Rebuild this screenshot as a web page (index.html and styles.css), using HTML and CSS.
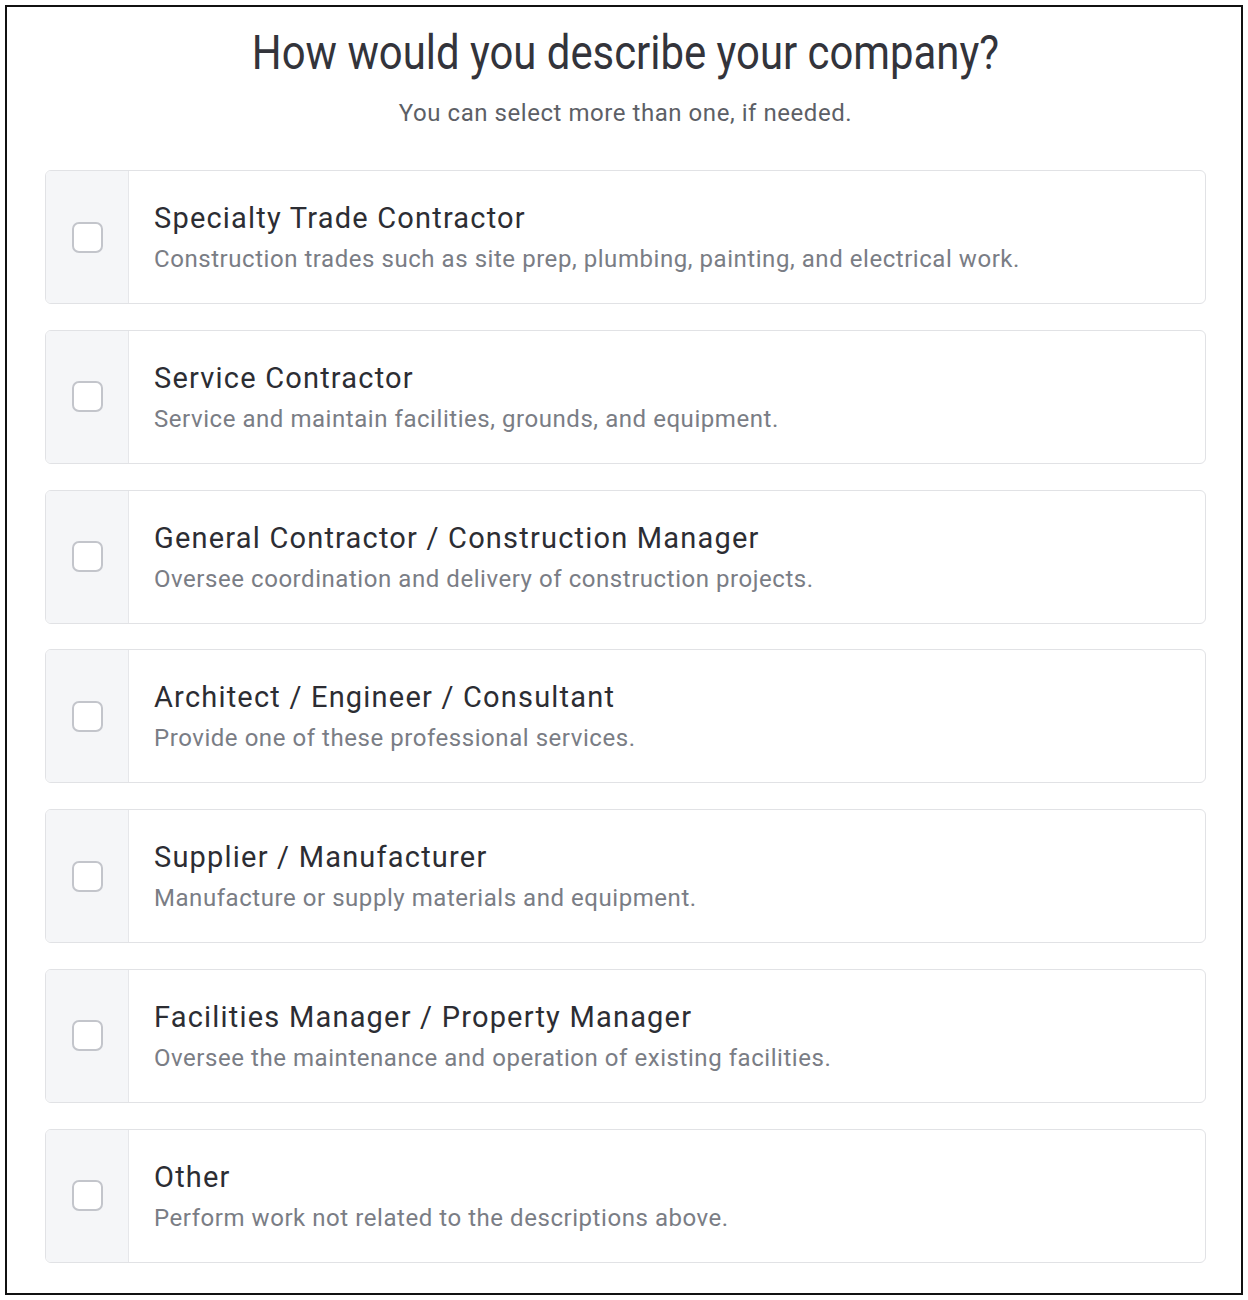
FILE: index.html
```html
<!DOCTYPE html>
<html lang="en">
<head>
<meta charset="utf-8">
<title>Company type</title>
<link rel="stylesheet" href="styles.css">
</head>
<body>
<div class="frame">
  <header class="head">
    <h1 class="title">How would you describe your company?</h1>
    <p class="subtitle">You can select more than one, if needed.</p>
  </header>
  <div class="options">
    <label class="option">
      <span class="check-col"><span class="box"></span></span>
      <span class="text">
        <span class="name">Specialty Trade Contractor</span>
        <span class="desc">Construction trades such as site prep, plumbing, painting, and electrical work.</span>
      </span>
    </label>
    <label class="option">
      <span class="check-col"><span class="box"></span></span>
      <span class="text">
        <span class="name">Service Contractor</span>
        <span class="desc">Service and maintain facilities, grounds, and equipment.</span>
      </span>
    </label>
    <label class="option">
      <span class="check-col"><span class="box"></span></span>
      <span class="text">
        <span class="name">General Contractor / Construction Manager</span>
        <span class="desc">Oversee coordination and delivery of construction projects.</span>
      </span>
    </label>
    <label class="option">
      <span class="check-col"><span class="box"></span></span>
      <span class="text">
        <span class="name">Architect / Engineer / Consultant</span>
        <span class="desc">Provide one of these professional services.</span>
      </span>
    </label>
    <label class="option">
      <span class="check-col"><span class="box"></span></span>
      <span class="text">
        <span class="name">Supplier / Manufacturer</span>
        <span class="desc">Manufacture or supply materials and equipment.</span>
      </span>
    </label>
    <label class="option">
      <span class="check-col"><span class="box"></span></span>
      <span class="text">
        <span class="name">Facilities Manager / Property Manager</span>
        <span class="desc">Oversee the maintenance and operation of existing facilities.</span>
      </span>
    </label>
    <label class="option">
      <span class="check-col"><span class="box"></span></span>
      <span class="text">
        <span class="name">Other</span>
        <span class="desc">Perform work not related to the descriptions above.</span>
      </span>
    </label>
  </div>
</div>
</body>
</html>
```
FILE: styles.css
```css
html, body {
  margin: 0;
  padding: 0;
  background: #ffffff;
}
body {
  padding: 5px;
  font-family: Roboto, "Liberation Sans", sans-serif;
}
.frame {
  box-sizing: border-box;
  width: 1238px;
  height: 1290px;
  border: 2px solid #111111;
  padding: 0 35px 0 38px;
}
.head {
  text-align: center;
  padding-top: 18px;
}
.title {
  margin: 0;
  font-weight: 400;
  font-size: 48px;
  line-height: 56px;
  color: #33343b;
  display: inline-block;
  transform: scaleX(0.872);
}
.subtitle {
  margin: 17px 0 0;
  font-size: 24px;
  line-height: 30px;
  letter-spacing: 0.55px;
  color: #5d5f66;
}
.options {
  display: flex;
  flex-direction: column;
  gap: 25.8px;
  margin-top: 42px;
}
.option {
  display: flex;
  height: 134px;
  box-sizing: border-box;
  border: 1px solid #e1e2e5;
  border-radius: 6px;
  overflow: hidden;
}
.check-col {
  width: 82px;
  flex: none;
  background: #f5f6f8;
  border-right: 1px solid #e6e7ea;
  display: flex;
  align-items: center;
  justify-content: center;
}
.box {
  width: 27px;
  height: 27px;
  border: 2px solid #c3c5cb;
  border-radius: 7px;
  background: #ffffff;
}
.text {
  display: flex;
  flex-direction: column;
  justify-content: center;
  padding-left: 25px;
  gap: 8px;
}
.name {
  font-size: 29px;
  line-height: 36px;
  letter-spacing: 1.2px;
  color: #2c2d33;
}
.desc {
  font-size: 24px;
  line-height: 30px;
  letter-spacing: 0.55px;
  color: #7a7d85;
}
```
